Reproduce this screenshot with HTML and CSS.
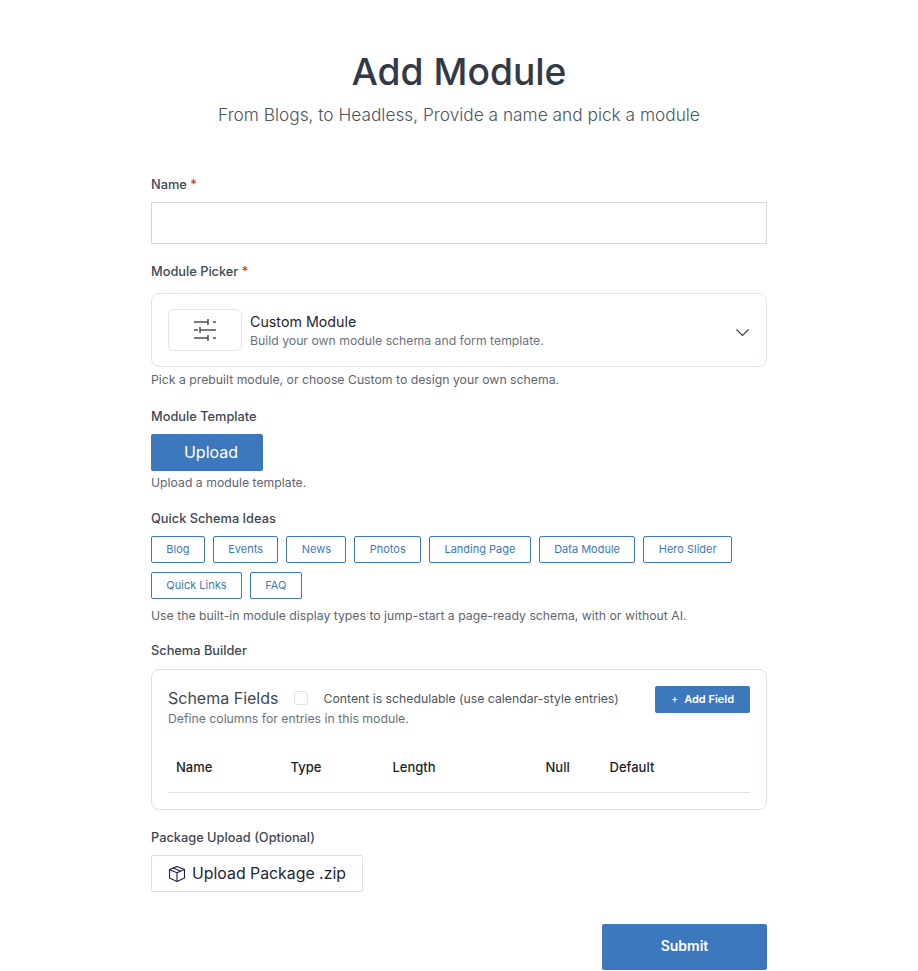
FILE: index.html
```html
<!DOCTYPE html>
<html lang="en">
<head>
<meta charset="utf-8">
<title>Add Module</title>
<link rel="stylesheet" href="styles.css">
</head>
<body>
<main class="page">
  <header class="head">
    <h1>Add Module</h1>
    <p>From Blogs, to Headless, Provide a name and pick a module</p>
  </header>
  <form class="form">
    <section class="field f-name">
      <label class="label">Name <span class="req">*</span></label>
      <input class="input" type="text">
    </section>
    <section class="field f-picker">
      <label class="label">Module Picker <span class="req">*</span></label>
      <div class="picker">
        <div class="picker-icon">
          <svg width="24" height="24" viewBox="0 0 24 24" fill="none" stroke="#4b5158" stroke-width="1.5"><path d="M1 4h14M15 1v6M20 4h3M1 12h4M7 9v6M7 12h16M1 20h14M15 17v6M20 20h3"/></svg>
        </div>
        <div class="picker-text">
          <div class="picker-title">Custom Module</div>
          <div class="picker-sub">Build your own module schema and form template.</div>
        </div>
        <svg class="chev" width="13" height="7" viewBox="0 0 13 7" fill="none" stroke="#333a45" stroke-width="1.1"><path d="M.5 .5l6 6 6-6"/></svg>
      </div>
      <p class="help">Pick a prebuilt module, or choose Custom to design your own schema.</p>
    </section>
    <section class="field f-template">
      <label class="label">Module Template</label>
      <button type="button" class="btn-upload">Upload</button>
      <p class="help">Upload a module template.</p>
    </section>
    <section class="field f-ideas">
      <label class="label">Quick Schema Ideas</label>
      <div class="chips">
        <button type="button" class="chip">Blog</button>
        <button type="button" class="chip">Events</button>
        <button type="button" class="chip">News</button>
        <button type="button" class="chip">Photos</button>
        <button type="button" class="chip">Landing Page</button>
        <button type="button" class="chip">Data Module</button>
        <button type="button" class="chip">Hero Slider</button>
        <button type="button" class="chip">Quick Links</button>
        <button type="button" class="chip">FAQ</button>
      </div>
      <p class="help">Use the built-in module display types to jump-start a page-ready schema, with or without AI.</p>
    </section>
    <section class="field f-builder">
      <label class="label">Schema Builder</label>
      <div class="card">
        <div class="card-top">
          <div>
            <div class="card-row">
              <span class="card-title">Schema Fields</span>
              <span class="check"></span>
              <span class="check-label">Content is schedulable (use calendar-style entries)</span>
            </div>
            <p class="card-sub">Define columns for entries in this module.</p>
          </div>
          <button type="button" class="btn-add"><span class="plus">+</span>Add Field</button>
        </div>
        <div class="cols">
          <span class="c1">Name</span>
          <span class="c2">Type</span>
          <span class="c3">Length</span>
          <span class="c4">Null</span>
          <span class="c5">Default</span>
        </div>
      </div>
    </section>
    <section class="field f-package">
      <label class="label">Package Upload (Optional)</label>
      <button type="button" class="btn-package">
        <svg class="box" width="18" height="18" viewBox="0 0 18 18" fill="none" stroke="#1a1f4b" stroke-width="1.1" stroke-linejoin="round"><path d="M9 1.500l7.500 3v8.500L9 16.500 1.500 13V4.500z"/><path d="M1.500 4.800L9 7.800l7.500-3.300M9 7.800v8.700M5.200 3l7.500 3.200"/></svg>
        <span class="pkg-text">Upload Package .zip</span>
      </button>
    </section>
    <div class="actions">
      <button type="button" class="btn-submit">Submit</button>
    </div>
  </form>
</main>
</body>
</html>
```
FILE: styles.css
```css
* { box-sizing: border-box; }
html, body { margin: 0; padding: 0; background: #fff; }
body { font-family: Inter, "Liberation Sans", sans-serif; color: #374151; height: 971px; overflow: hidden; }
button { font-family: inherit; cursor: pointer; }
p { margin: 0; }
.page { width: 616px; margin-left: 151px; }
.head { text-align: center; padding-top: 48px; }
.head h1 { margin: 0; font-size: 37.200px; line-height: 48px; font-weight: 450; color: #333a47; }
.head p { margin-top: 6px; font-size: 17.300px; line-height: 26px; font-weight: 300; color: #4b5563; }
.field { display: block; }
.f-name { margin-top: 46px; }
.f-picker { margin-top: 17px; }
.f-template { margin-top: 17px; }
.f-ideas { margin-top: 16px; }
.f-builder { margin-top: 15px; }
.f-package { margin-top: 17px; }
.label { display: block; font-size: 12.800px; line-height: 22px; font-weight: 450; color: #414854; }
.req { color: #dc2626; }
.input { display: block; width: 100%; height: 42px; margin-top: 6px; border: 1px solid #d6d8dd; background: #fff; }
.picker { display: flex; align-items: center; height: 74px; margin-top: 10px; padding: 0 17px 0 16px; border: 1px solid #e0e2e7; border-radius: 8px; }
.picker-icon { display: flex; align-items: center; justify-content: center; width: 74px; height: 42px; border: 1px solid #e3e5e9; border-radius: 6px; }
.picker-text { flex: 1; margin-left: 8px; }
.picker-title { font-size: 14.250px; line-height: 20px; color: #1f2430; }
.picker-sub { font-size: 12.250px; line-height: 17px; color: #6b7280; }
.chev { margin-top: 4px; }
.help { font-size: 12.250px; line-height: 18px; color: #5f6672; margin-top: 4px; }
.btn-upload { display: block; width: 112px; height: 37px; margin-top: 6px; padding: 0 0 2px 8px; border: 0; border-radius: 2px; background: #3d78bd; color: #fff; font-size: 16px; }
.f-template .help { margin-top: 3px; }
.chips { display: flex; flex-wrap: wrap; gap: 9px 8px; margin-top: 6px; }
.chip { height: 27px; padding: 0 14.350px 2px; border: 1px solid #3d78bd; border-radius: 2px; background: #fff; color: #3d78bd; font-size: 11px; }
.f-ideas .help { margin-top: 8px; }
.card { height: 141px; margin-top: 7px; padding: 16px; border: 1px solid #dcdfe4; border-radius: 8px; }
.card-top { display: flex; justify-content: space-between; align-items: flex-start; height: 56px; }
.card-row { display: flex; align-items: center; height: 24px; }
.card-title { font-size: 16px; color: #414854; }
.check { width: 14px; height: 14px; margin-left: 16px; border: 1px solid #dfe1e6; border-radius: 3px; }
.check-label { margin-left: 15px; font-size: 12.250px; color: #4b5563; }
.card-sub { margin-top: 0; font-size: 12.250px; line-height: 17px; color: #6b7280; }
.btn-add { height: 27px; width: 95px; border: 0; border-radius: 2px; background: #3d78bd; color: #fff; font-size: 11px; font-weight: 600; padding: 0 0 2px; }
.plus { margin-right: 6px; font-weight: 400; }
.cols { display: grid; grid-template-columns: 114.500px 102px 153px 64px 1fr; height: 43px; margin-top: 8px; padding: 7px 8px 0; border-bottom: 1px solid #e2e4e9; font-size: 13px; font-weight: 450; color: #1a1f2a; line-height: 20px; }
.btn-package { display: flex; align-items: center; gap: 6px; width: 212px; height: 37px; margin-top: 6px; padding: 0 16px 1px; border: 1px solid #dcdfe4; border-radius: 2px; background: #fff; color: #1a2540; font-size: 15.850px; }
.box { flex: none; margin-top: 1px; }
.pkg-text { white-space: nowrap; }
.actions { display: flex; justify-content: flex-end; margin-top: 32px; }
.btn-submit { width: 165px; height: 46px; padding: 0 0 3px; border: 0; border-radius: 2px; background: #3d78bd; color: #fff; font-size: 14px; font-weight: 600; }
```
